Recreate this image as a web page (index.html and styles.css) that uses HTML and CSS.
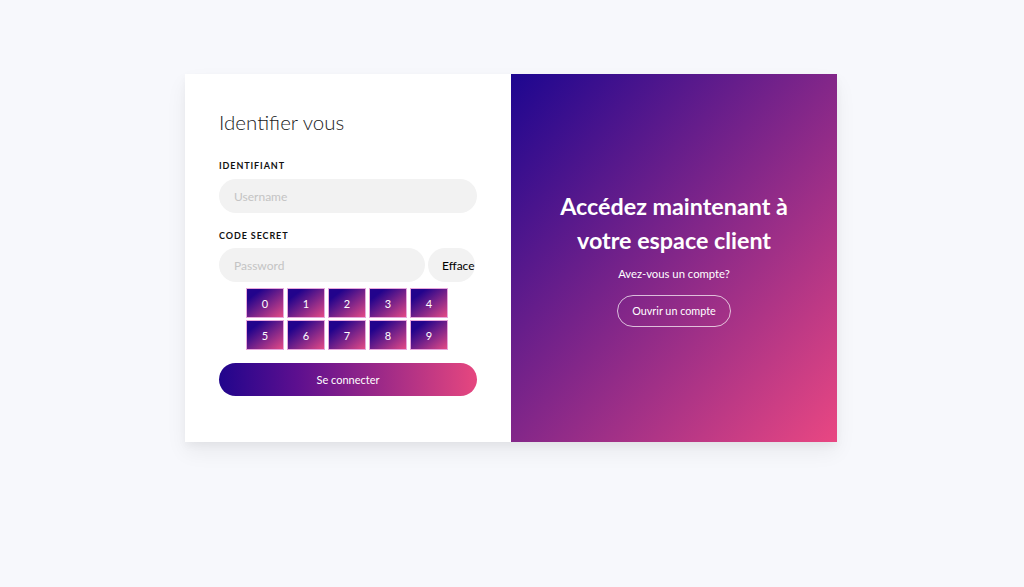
FILE: index.html
```html
<!DOCTYPE html>
<html lang="fr">

<head>
    <meta charset="UTF-8">
    <meta name="viewport" content="width=device-width, initial-scale=1.0">
    <title>Identifier vous</title>
    <link rel="stylesheet" href="styles.css">
</head>

<body>
    <div class="login-card">
        <form class="login-form">
            <h2>Identifier vous</h2>
            <label>Identifiant</label>
            <input type="text" placeholder="Username">
            <label class="code-label">Code secret</label>
            <div class="pass-row">
                <input type="password" placeholder="Password">
                <button type="button" class="clear-btn">Efface</button>
            </div>
            <div class="keypad">
                <b>0</b><b>1</b><b>2</b><b>3</b><b>4</b>
                <b>5</b><b>6</b><b>7</b><b>8</b><b>9</b>
            </div>
            <button type="button" class="submit-btn">Se connecter</button>
        </form>
        <aside class="login-side">
            <h1>Accédez maintenant à votre espace client</h1>
            <p>Avez-vous un compte?</p>
            <button type="button" class="ghost-btn">Ouvrir un compte</button>
        </aside>
    </div>
</body>

</html>
```

FILE: styles.css
```css
body {
    margin: 0;
    font-family: Lato, "Open Sans", sans-serif;
    background-color: #f7f8fc;
    min-height: 100vh;
    padding-top: 74px;
    box-sizing: border-box;
}

.login-card {
    width: 652px;
    height: 368px;
    margin: 0 0 0 calc(50% - 327px);
    display: flex;
    background-color: white;
    box-shadow: 0 10px 20px rgba(0, 0, 0, .06), 0 4px 8px rgba(0, 0, 0, .04);
}

.login-form {
    width: 326px;
    box-sizing: border-box;
    padding: 36px 34px 0 34px;
    display: flex;
    flex-direction: column;
}

.login-form h2 {
    font-weight: 300;
    font-size: 20.5px;
    margin: 0 0 26px 0;
    color: #1a1a1a;
}

.login-form label {
    font-size: 9px;
    font-weight: 700;
    letter-spacing: .9px;
    text-transform: uppercase;
    color: #111;
    margin-bottom: 8px;
}

.login-form label.code-label {
    margin-bottom: 7px;
}

.login-form input {
    font-family: inherit;
    font-size: 12px;
    height: 34px;
    border: none;
    border-radius: 17px;
    background-color: #f2f2f2;
    padding: 0 15px;
    box-sizing: border-box;
    outline: none;
    margin-bottom: 17px;
}

.login-form input::placeholder {
    color: #c4c4c4;
}

.pass-row {
    display: flex;
    gap: 3px;
}

.pass-row input {
    width: 206px;
    margin-bottom: 0;
}

.clear-btn {
    width: 47px;
    height: 34px;
    border: none;
    border-radius: 17px;
    background-color: #f2f2f2;
    font-family: inherit;
    font-size: 12px;
    color: #000;
    padding: 0 0 0 14px;
    text-align: left;
    white-space: nowrap;
    overflow: hidden;
}

.keypad {
    display: grid;
    grid-template-columns: repeat(5, 38px);
    grid-auto-rows: 30px;
    gap: 2px 3px;
    margin: 6px 0 13px 27px;
}

.keypad>b {
    display: flex;
    align-items: center;
    justify-content: center;
    font-size: 11px;
    font-weight: 400;
    color: white;
    border: 1px solid #e8a6dc;
    background: linear-gradient(to bottom right, #22038c 20%, #e44a86);
}

.submit-btn {
    height: 33px;
    border: none;
    border-radius: 17px;
    font-family: inherit;
    font-size: 11px;
    color: white;
    background: linear-gradient(to right, #21058c, #5c0f8f 30%, #e6477f);
}

.login-side {
    width: 326px;
    box-sizing: border-box;
    padding: 0 20px 1px 20px;
    background: linear-gradient(to bottom right, #1d0690, #e94782);
    color: white;
    display: flex;
    flex-direction: column;
    align-items: center;
    justify-content: center;
    text-align: center;
}

.login-side h1 {
    font-size: 23.3px;
    font-weight: 700;
    line-height: 34px;
    margin: 0 0 10px 0;
}

.login-side p {
    font-size: 11.3px;
    margin: 0 0 15px 0;
}

.ghost-btn {
    font-family: inherit;
    font-size: 10.8px;
    color: white;
    background: transparent;
    border: 1px solid rgba(255, 255, 255, .7);
    border-radius: 16px;
    height: 32px;
    padding: 0 14px;
}
```
